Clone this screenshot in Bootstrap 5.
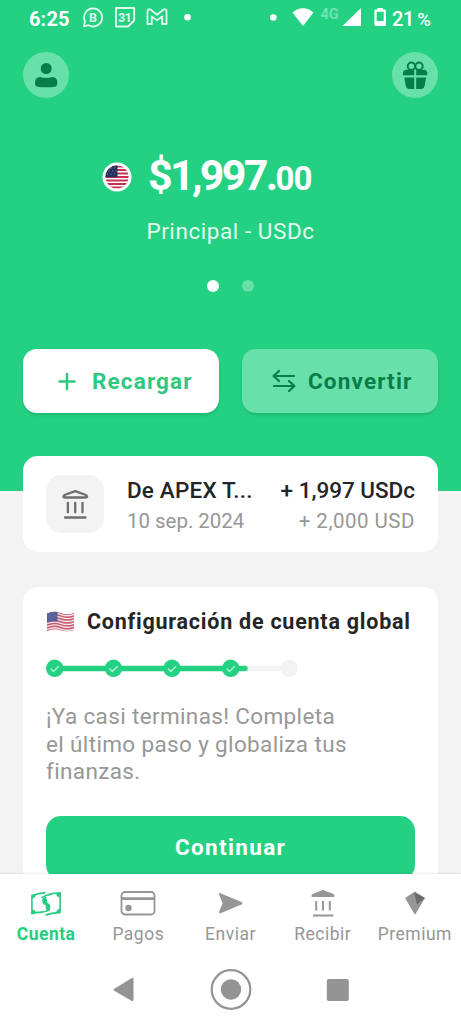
<!DOCTYPE html>
<html lang="es">
<head>
<meta charset="utf-8">
<meta name="viewport" content="width=device-width, initial-scale=1">
<title>Cuenta</title>
<link rel="stylesheet" href="https://cdn.jsdelivr.net/npm/bootstrap@5.3.0/dist/css/bootstrap.min.css">
<style>
  :root { --brand: #24d183; --brand-soft: #67e0a9; --brand-dark: #077d4a; --ink: #252525; --muted: #979797; --surface: #f3f3f3; }
  body { font-family: Roboto, "Liberation Sans", sans-serif; color: var(--ink); }
  svg { display: block; flex-shrink: 0; }
  .screen { height: 1024px; }
  .content-area { height: 874px; background: linear-gradient(var(--brand) 490.7px, var(--surface) 490.7px); }
  .status-bar { height: 38px; padding: 0 30px 0 29px; color: #fff; font-size: 20px; line-height: 38px; }
  .clock { letter-spacing: .15px; }
  .notices { margin-right: 73px; }
  .battery { width: 41px; padding-left: 2px; font-weight: 500; white-space: nowrap; letter-spacing: -.3px; }
  .battery span { margin-left: 3px; font-size: 18.5px; }
  .round-btn { width: 46px; height: 46px; background: var(--brand-soft); color: var(--brand-dark); }
  .top-actions { padding: 14px 23px 0; }
  .balance { margin-top: 57px; height: 44px; padding-left: 102px; color: #fff; }
  .amount { font-size: 43px; font-weight: 700; line-height: 46px; letter-spacing: -2.7px; margin-left: 16px; white-space: nowrap; }
  .cents { font-size: 33px; letter-spacing: -.9px; }
  .account-name { margin-top: 18px; font-size: 22.5px; line-height: 28px; letter-spacing: .56px; color: #e2fbef; }
  .pager { margin-top: 35px; gap: 23px; }
  .pager span { width: 12px; height: 12px; border-radius: 50%; background: var(--brand-soft); }
  .pager .current { background: #fff; }
  .actions { margin-top: 57px; padding: 0 23px; gap: 23px; }
  .action { height: 64px; border: 0; border-radius: 14px; font-size: 22.5px; font-weight: 700; letter-spacing: 1.15px; padding: 2px 0 0; box-shadow: 0 2px 3px rgba(0, 90, 50, .22); white-space: nowrap; }
  .action-main { background: #fff; color: #2fc880; }
  .action-alt { background: var(--brand-soft); color: var(--brand-dark); }
  .panel { margin: 0 23px; background: #fff; border: 0; border-radius: 15px; }
  .movement { margin-top: 43px; height: 96px; padding: 0 23px; }
  .tile { width: 58px; height: 58px; border-radius: 15px; background: var(--surface); margin-right: 23px; }
  .texts { padding-top: 3px; }
  .line-1 { font-size: 22.5px; font-weight: 500; line-height: 31px; white-space: nowrap; }
  .line-2 { font-size: 20.5px; line-height: 30px; color: var(--muted); white-space: nowrap; }
  .name-text { letter-spacing: .18px; }
  .date-text { letter-spacing: -.03px; }
  .sum-text { letter-spacing: -.02px; }
  .source-text { letter-spacing: .5px; }
  .setup { margin-top: 35px; height: 330px; padding: 0 23px; }
  .setup-title { margin-top: 19px; height: 31px; font-size: 21.5px; font-weight: 700; letter-spacing: .76px; line-height: 31px; white-space: nowrap; }
  .steps { margin-top: 22px; }
  .hint { margin: 26px 0 0; font-size: 22.5px; line-height: 27.7px; letter-spacing: .36px; color: var(--muted); white-space: nowrap; }
  .continue { margin-top: 30px; height: 64px; border: 0; border-radius: 15px; background: var(--brand); color: #fff; font-size: 22.5px; font-weight: 700; letter-spacing: 1.35px; }
  .tabs { height: 76px; background: #fff; color: var(--muted); box-shadow: 0 -1px 2px rgba(0, 0, 0, .08); position: relative; }
  .tabs a { width: 20%; color: #969696; font-size: 17.5px; letter-spacing: .5px; line-height: 25px; text-decoration: none; padding-top: 12px; white-space: nowrap; }
  .tabs a svg { height: 36px; }
  .tabs .on { color: #26cd81; font-weight: 700; }
  .system-nav { height: 74px; padding-top: 5px; background: #fff; color: #949494; }
</style>
</head>
<body>
<div class="screen d-flex flex-column overflow-hidden">
  <main class="content-area overflow-hidden">
    <div class="status-bar d-flex align-items-center">
      <span class="clock fw-bold">6:25</span>
      <svg class="notices ms-auto" width="117" height="26" viewBox="78 6 117 26" fill="none" stroke="#dffaed" stroke-width="1.8" stroke-linejoin="round">
        <path d="M84 26.300 85 21.300a9 9 0 1 1 3.600 3.900z"/>
        <text x="93" y="21.700" text-anchor="middle" font-size="12.500" font-weight="700" fill="#dffaed" stroke="none">B</text>
        <path d="M116 8h18.200v12.500l-6.200 6H116z"/>
        <text x="124.800" y="21.500" text-anchor="middle" font-size="12" font-weight="700" fill="#dffaed" stroke="none" letter-spacing="-.3">31</text>
        <path d="M147.500 24V11.500c0-2.500 2-2.700 3.200-1.800l6.300 5 6.300-5c1.200-.9 3.200-.7 3.200 1.800V24h-4.300v-7.600l-5.200 4-5.200-4V24z"/>
        <circle cx="187.500" cy="17.300" r="3.300" fill="#fff" stroke="none"/>
      </svg>
      <svg width="122" height="26" viewBox="268 6 122 26" fill="#fff">
        <circle cx="273.300" cy="17.500" r="3.300"/>
        <path d="M303 26 292.500 12.600c6-5.800 15-5.800 21 0z"/>
        <text x="320.500" y="19" font-size="14.500" font-weight="700" fill="#70e2ae">4G</text>
        <path d="M342.500 26 361 8v18z"/>
        <path fill-rule="evenodd" d="M377.500 8h5.500v1.500h1.700q1.300 0 1.300 1.300v14q0 1.300-1.300 1.300h-9q-1.300 0-1.300-1.300v-14q0-1.300 1.300-1.300h1.800zM376.700 11.700v9.300h7v-9.300z"/>
      </svg>
      <span class="battery">21<span>%</span></span>
    </div>

    <div class="top-actions d-flex justify-content-between">
      <div class="round-btn rounded-circle">
        <svg width="46" height="46" viewBox="0 0 46 46" fill="currentColor"><circle cx="23.200" cy="16.500" r="5.500"/><path d="M12 31q0-5.800 5-5.900 2.500 1 6.200 1t6.100-1q5 .1 5 5.900 0 3.300-2.300 3.700-8.800 1.300-17.700 0Q12 34.300 12 31z"/></svg>
      </div>
      <div class="round-btn rounded-circle">
        <svg width="46" height="46" viewBox="0 0 46 46" fill="currentColor"><g fill="none" stroke="currentColor" stroke-width="2"><circle cx="19.400" cy="14.200" r="3.700"/><circle cx="27" cy="14.200" r="3.700"/></g><path d="M11 23.300v-2q0-3.500 3.500-3.500h7.700v5.500zm13.200 0v-5.500h7.600q3.500 0 3.500 3.500v2zM12.300 25.500h9.900V37h-4.500q-3.400 0-4-3.500zm11.900 0h9.900l-1.400 8q-.6 3.500-4 3.500h-4.500z"/></svg>
      </div>
    </div>

    <div class="balance d-flex align-items-center">
      <svg width="30" height="30" viewBox="0 0 30 30">
        <defs><clipPath id="disc"><circle cx="15" cy="15" r="11.500"/></clipPath></defs>
        <circle cx="15" cy="15" r="14.500" fill="#fff"/>
        <g clip-path="url(#disc)"><path fill="#fff" d="M3 3h24v24H3z"/><path stroke="#c8314f" stroke-width="1.900" d="M3 4.500h24M3 8h24M3 11.500h24M3 15h24M3 18.500h24M3 22h24M3 25.500h24"/><path fill="#25305f" d="M3 3h12.500v12.300H3z"/><path stroke="#8c96b8" stroke-width="1" stroke-dasharray="1 2.500" d="M5 6h10M6.500 9h9M5 12h10"/></g>
      </svg>
      <div class="amount">$1,997.<span class="cents">00</span></div>
    </div>
    <div class="account-name text-center">Principal - USDc</div>
    <div class="pager d-flex justify-content-center"><span class="current"></span><span></span></div>

    <div class="actions d-flex">
      <button class="btn action action-main d-flex flex-fill w-50 align-items-center">
        <svg width="69" height="26" viewBox="0 0 69 26" fill="none" stroke="currentColor" stroke-width="2.500" stroke-linecap="round"><path d="M44 5v15M36.500 12.500h15"/></svg>Recargar
      </button>
      <button class="btn action action-alt d-flex flex-fill w-50 align-items-center">
        <svg width="66" height="26" viewBox="0 0 66 26" fill="none" stroke="currentColor" stroke-width="2.200" stroke-linecap="round" stroke-linejoin="round"><path d="M52 7H32m5-5-5.500 5 5.500 5M32 17h20m-5-5 5.500 5-5.500 5"/></svg>Convertir
      </button>
    </div>

    <section class="panel movement d-flex align-items-center">
      <div class="tile">
        <svg width="58" height="58" viewBox="0 0 58 58" fill="none" stroke="#6e6e6e" stroke-width="2.300" stroke-linecap="round" stroke-linejoin="round"><path d="M29.200 16.200 40 20q2.500 2.500-.5 2.500H19q-3 0-.5-2.500z"/><path d="M21.900 27.800v9.500M29.200 27.800v9.500M36.500 27.800v9.500M19 42.500h20.500"/></svg>
      </div>
      <div class="texts">
        <div class="line-1 name-text">De APEX T...</div>
        <div class="line-2 date-text">10 sep. 2024</div>
      </div>
      <div class="texts ms-auto text-end">
        <div class="line-1 sum-text">+ 1,997 USDc</div>
        <div class="line-2 source-text">+ 2,000 USD</div>
      </div>
    </section>

    <section class="panel setup overflow-hidden">
      <div class="setup-title d-flex align-items-center">
        <svg width="29" height="22" viewBox="0 0 29 22" style="margin-right:12px">
          <defs><clipPath id="wave"><path d="M1 2.500q7-3 13.500-.5t13.500 0v17q-7 2.500-13.500.2T1 20z"/></clipPath></defs>
          <g clip-path="url(#wave)"><path fill="#f5e6e9" d="M0 0h29v22H0z"/><g fill="none" stroke="#c6566b" stroke-width="1.500"><path d="M1 2.500q7-3 13.500-.5t13.500 0M1 5.400q7-3 13.500-.5t13.500 0M1 8.300q7-3 13.500-.5t13.500 0M1 11.200q7-3 13.500-.5t13.500 0M1 14.100q7-3 13.500-.5t13.500 0M1 17q7-3 13.500-.5t13.500 0M1 19.900q7-3 13.500-.5t13.500 0"/></g><path fill="#5b6396" d="M0 0h11.500v10.700q-5-.8-11.500 1z"/></g>
        </svg>
        <span>Configuración de cuenta global</span>
      </div>
      <svg class="steps" width="254" height="18" viewBox="0 0 254 18">
        <path stroke="#f3f3f3" stroke-width="5.500" d="M9 9.500h234"/><circle cx="243" cy="9.300" r="8.700" fill="#f3f3f3"/>
        <path stroke="#24d183" stroke-width="5.500" stroke-linecap="round" d="M9 9.500h190"/>
        <g fill="#24d183"><circle cx="8.700" cy="9.300" r="8.700"/><circle cx="67.500" cy="9.300" r="8.700"/><circle cx="126" cy="9.300" r="8.700"/><circle cx="184.700" cy="9.300" r="8.700"/></g>
        <path fill="none" stroke="#b4f2d5" stroke-width="1.300" stroke-linecap="round" stroke-linejoin="round" d="m5 10 2.500 2.500 5-5M63.800 10l2.500 2.500 5-5M122.300 10l2.500 2.500 5-5M181 10l2.500 2.500 5-5"/>
      </svg>
      <p class="hint">¡Ya casi terminas! Completa<br>el último paso y globaliza tus<br>finanzas.</p>
      <button class="btn continue w-100">Continuar</button>
    </section>
  </main>

  <nav class="tabs d-flex">
    <a href="#" class="on d-flex flex-column align-items-center">
      <svg width="32" viewBox="0 0 32 36" fill="none" stroke="currentColor" stroke-width="1.600" stroke-linejoin="round"><path d="M15.500 6.600Q9 7 1.900 9.500v18.200q5-1.700 10.600-1.200M15.500 29.300q6-2.700 14.600-2.700V6.800q-6.600 0-12.600 2.200"/><path d="M11.500 11.800q4.500-3.200 10-3.800M10.500 26.300q5-.3 9.500-2.800"/><g fill="currentColor" stroke="none"><path d="M15.500 10.500q-4.200 2-3 6 .8 2.200 3 2.500-.3 4 1.800 6.300 4-2.300 2.700-6.300-1-2-2.700-2.300.3-3.700-1.800-6.200zM2 10l4-1.200Q5.500 12 2 12.500zM2 23.500q3 0 4 3L2 27.500zM30 7v4.500q-3 0-4-4zM30 22.500v4.300h-4q1-3.800 4-4.300z"/></g></svg>
      <span>Cuenta</span>
    </a>
    <a href="#" class="d-flex flex-column align-items-center">
      <svg width="36" viewBox="0 0 36 36" fill="none" stroke="currentColor" stroke-width="1.800"><rect x="1.500" y="6" width="33" height="22.500" rx="3.500"/><path stroke-width="2.800" d="M1.500 12.700h33"/><circle cx="8.500" cy="22" r="3.200" fill="currentColor" stroke="none"/></svg>
      <span>Pagos</span>
    </a>
    <a href="#" class="d-flex flex-column align-items-center">
      <svg width="28" viewBox="0 0 28 36" fill="currentColor"><path d="M3 8.300Q2.400 6.500 4.500 7.200l21 8.800q2 1.200 0 2.400l-21 8.800Q2.400 27.500 3 26l3.600-8.800z"/></svg>
      <span>Enviar</span>
    </a>
    <a href="#" class="d-flex flex-column align-items-center">
      <svg width="28" viewBox="0 0 28 36" fill="currentColor"><path d="M14 4 24.500 8q2.500 3-.5 3H4q-3 0-.500-3z"/><path fill="none" stroke="currentColor" stroke-width="2" d="M7.200 15v9.500M14 15v9.500M20.800 15v9.500M4 29.500h20.500"/></svg>
      <span>Recibir</span>
    </a>
    <a href="#" class="d-flex flex-column align-items-center">
      <svg width="24" viewBox="0 0 24 36" fill="currentColor"><path d="M12 5.500 22 12 12.500 28q-.5 1-1 0L2 12z"/><path fill="#6b6b6b" d="M11 6.500 22 12l-8 6.500z"/></svg>
      <span>Premium</span>
    </a>
  </nav>

  <div class="system-nav d-flex justify-content-center">
    <svg width="240" height="60" viewBox="110.500 955 240 60" fill="currentColor">
      <path d="M131 978.200q2-1 2 1v20.600q0 2-2 1l-17.300-10q-1.400-1 0-2z"/>
      <circle cx="230.500" cy="989.500" r="19.300" fill="none" stroke="currentColor" stroke-width="2.200"/><circle cx="230.500" cy="989.500" r="10.200"/>
      <rect x="326.300" y="979" width="22" height="22" rx="2"/>
    </svg>
  </div>
</div>
<script src="https://cdn.jsdelivr.net/npm/bootstrap@5.3.0/dist/js/bootstrap.bundle.min.js"></script>
</body>
</html>
